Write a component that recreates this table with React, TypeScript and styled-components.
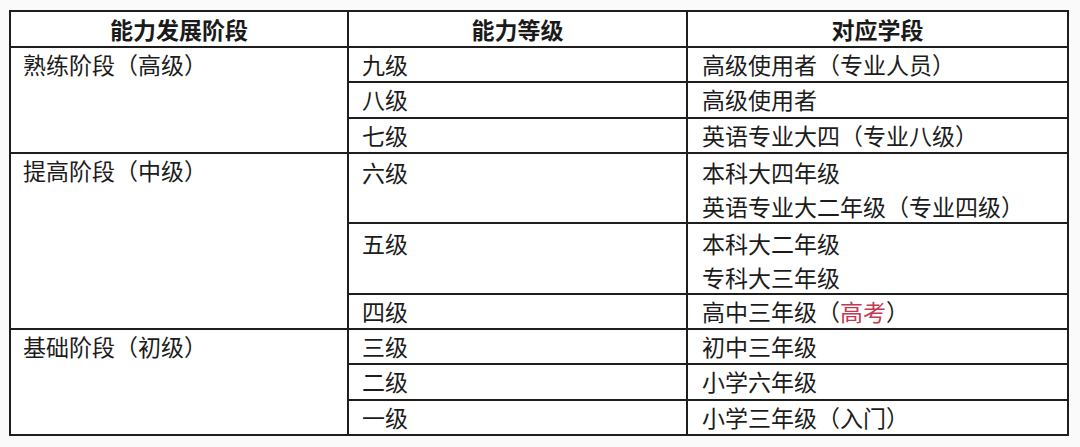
import React from "react";
import styled, { createGlobalStyle } from "styled-components";

const Global = createGlobalStyle`
  html, body {
    margin: 0;
    padding: 0;
    background: #fafafa;
  }
  body {
    font-family: "Noto Sans CJK SC", "Noto Sans", sans-serif;
    color: #1c1c1c;
  }
`;

const Page = styled.div`
  width: 1080px;
  height: 447px;
  padding: 10px 0 0 9px;
  box-sizing: border-box;
`;

const Grid = styled.div`
  display: grid;
  width: 1060px;
  box-sizing: border-box;
  grid-template-columns: 336px 337px 379px;
  grid-template-rows: 34px 33.27px 33.27px 33.27px 68.5px 68.5px 33.27px 33.27px 33.27px 33.27px;
  gap: 2px;
  padding: 2px;
  background: #1e1e1e;
`;

const HeadCell = styled.div`
  background: #ffffff;
  font-size: 23px;
  font-weight: 700;
  line-height: 34px;
  text-align: center;
  color: #1a1a1a;
  white-space: nowrap;
`;

const Cell = styled.div<{ $span?: number; $multi?: boolean; $pad?: number }>`
  background: #ffffff;
  grid-row: span ${(p) => p.$span ?? 1};
  padding: ${(p) => (p.$multi ? "1.5px" : "0")} 0 0 ${(p) => p.$pad ?? 12}px;
  font-size: 23px;
  line-height: ${(p) => (p.$multi ? "34px" : "33.27px")};
  white-space: nowrap;
  overflow: hidden;
`;

const Line = styled.div``;

const Red = styled.span`
  color: #c23a52;
`;

type Row = {
  stage?: string;
  level: string;
  school: React.ReactNode[];
};

const rows: Row[] = [
  { stage: "熟练阶段（高级）", level: "九级", school: ["高级使用者（专业人员）"] },
  { level: "八级", school: ["高级使用者"] },
  { level: "七级", school: ["英语专业大四（专业八级）"] },
  {
    stage: "提高阶段（中级）",
    level: "六级",
    school: ["本科大四年级", "英语专业大二年级（专业四级）"],
  },
  { level: "五级", school: ["本科大二年级", "专科大三年级"] },
  {
    level: "四级",
    school: [
      <>
        高中三年级（<Red>高考</Red>）
      </>,
    ],
  },
  { stage: "基础阶段（初级）", level: "三级", school: ["初中三年级"] },
  { level: "二级", school: ["小学六年级"] },
  { level: "一级", school: ["小学三年级（入门）"] },
];

export default function App() {
  return (
    <Page>
      <Global />
      <Grid>
        <HeadCell>能力发展阶段</HeadCell>
        <HeadCell>能力等级</HeadCell>
        <HeadCell>对应学段</HeadCell>
        {rows.map((r, i) => {
          const multi = r.school.length > 1;
          return (
            <React.Fragment key={i}>
              {r.stage && <Cell $span={3}>{r.stage}</Cell>}
              <Cell $multi={multi} $pad={13}>
                <Line>{r.level}</Line>
              </Cell>
              <Cell $multi={multi} $pad={14}>
                {r.school.map((s, j) => (
                  <Line key={j}>{s}</Line>
                ))}
              </Cell>
            </React.Fragment>
          );
        })}
      </Grid>
    </Page>
  );
}
